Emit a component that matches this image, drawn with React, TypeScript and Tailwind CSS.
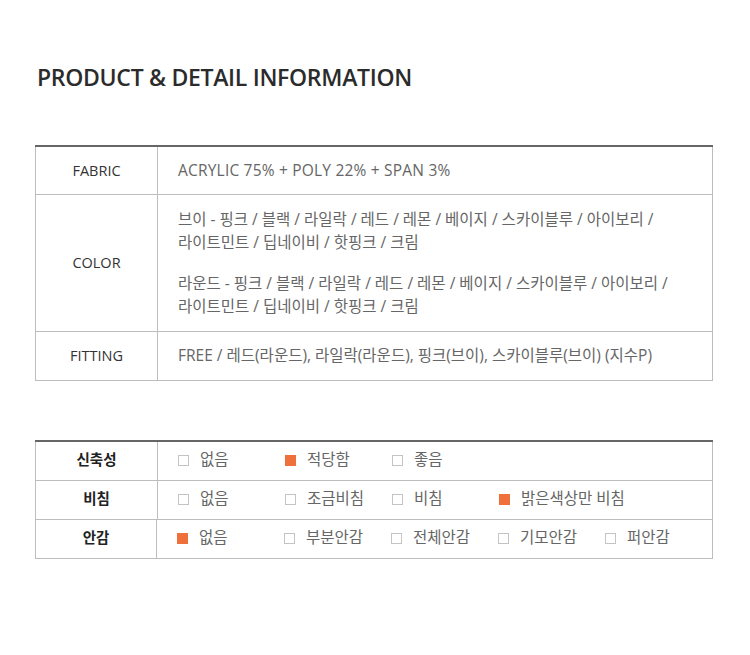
const font = "font-['Open_Sans','Noto_Sans_CJK_KR',sans-serif]";

type Opt = { label: string; on?: boolean };

const fitRows: { name: string; opts: Opt[] }[] = [
  { name: "신축성", opts: [{ label: "없음" }, { label: "적당함", on: true }, { label: "좋음" }] },
  { name: "비침", opts: [{ label: "없음" }, { label: "조금비침" }, { label: "비침" }, { label: "밝은색상만 비침", on: true }] },
  { name: "안감", opts: [{ label: "없음", on: true }, { label: "부분안감" }, { label: "전체안감" }, { label: "기모안감" }, { label: "퍼안감" }] },
];

function Check({ on }: { on?: boolean }) {
  return (
    <span
      className={
        on
          ? "inline-block shrink-0 w-[11px] h-[11px] bg-[#f0703c] border border-[#f0703c]"
          : "inline-block shrink-0 w-[11px] h-[11px] bg-white border border-[#c4c4c4]"
      }
    />
  );
}

export default function App() {
  return (
    <div className={`w-[750px] h-[655px] bg-white ${font}`}>
      <div className="pl-[37px] pt-[61px]">
        <h1 className="text-[23px] font-semibold text-[#2b2b2b] leading-[32px] tracking-[-0.3px]">
          PRODUCT &amp; DETAIL INFORMATION
        </h1>
      </div>

      <div className="mx-[35px] w-[678px] mt-[52px] border-t-2 border-[#666] text-[14.5px]">
        <div className="flex border-x border-b border-[#bdbdbd] h-[48px]">
          <div className="w-[122px] flex items-center justify-center text-[#333] border-r border-[#bdbdbd]">FABRIC</div>
          <div className="flex-1 flex items-center pl-[20px] text-[#666] text-[15.5px] tracking-[0.2px]">
            ACRYLIC 75% + POLY 22% + SPAN 3%
          </div>
        </div>
        <div className="flex border-x border-b border-[#bdbdbd] h-[137px]">
          <div className="w-[122px] flex items-center justify-center text-[#333] border-r border-[#bdbdbd]">COLOR</div>
          <div className="flex-1 flex flex-col justify-center pl-[20px] text-[#666] text-[15.5px] leading-[23px] gap-[18px]">
            <p>
              브이 - 핑크 / 블랙 / 라일락 / 레드 / 레몬 / 베이지 / 스카이블루 / 아이보리 /<br />
              라이트민트 / 딥네이비 / 핫핑크 / 크림
            </p>
            <p>
              라운드 - 핑크 / 블랙 / 라일락 / 레드 / 레몬 / 베이지 / 스카이블루 / 아이보리 /<br />
              라이트민트 / 딥네이비 / 핫핑크 / 크림
            </p>
          </div>
        </div>
        <div className="flex border-x border-b border-[#bdbdbd] h-[49px]">
          <div className="w-[122px] flex items-center justify-center text-[#333] border-r border-[#bdbdbd]">FITTING</div>
          <div className="flex-1 flex items-center pl-[20px] text-[#666] text-[15.5px]">
            FREE / 레드(라운드), 라일락(라운드), 핑크(브이), 스카이블루(브이) (지수P)
          </div>
        </div>
      </div>

      <div className="mx-[35px] w-[678px] mt-[59px] border-t-2 border-[#666] text-[14px]">
        {fitRows.map((r) => (
          <div key={r.name} className="flex border-x border-b border-[#bdbdbd] h-[39px]">
            <div className="w-[122px] flex items-center justify-center text-[#222] text-[14.5px] font-bold border-r border-[#bdbdbd] pb-[2px]">
              {r.name}
            </div>
            <div className="flex-1 flex items-center pl-[20px] text-[#666] text-[15.5px] pb-[2px]">
              {r.opts.map((o) => (
                <div key={o.label} className="w-[107px] flex items-center gap-[11px] shrink-0">
                  <Check on={o.on} />
                  <span className="whitespace-nowrap">{o.label}</span>
                </div>
              ))}
            </div>
          </div>
        ))}
      </div>
    </div>
  );
}
